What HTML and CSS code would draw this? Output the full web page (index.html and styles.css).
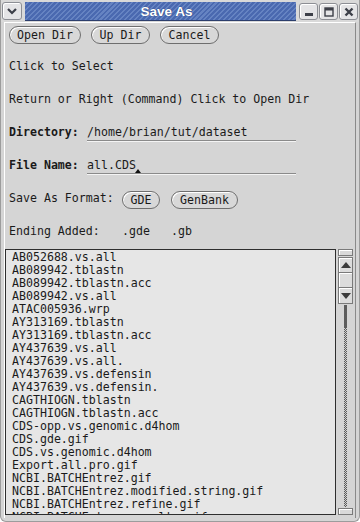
FILE: index.html
```html
<!DOCTYPE html>
<html lang="en">
<head>
    <meta charset="UTF-8">
    <meta name="viewport" content="width=device-width, initial-scale=1.0">
    <title>Save As</title>
    <link rel="stylesheet" href="styles.css">
</head>
<body>
    <div class="window">
        <div class="titlebar">
            <span class="tb-btn menu">
                <svg width="12" height="8" viewBox="0 0 12 8"><path d="M2 2 L6 6 L10 2" fill="none" stroke="#3c3f48" stroke-width="2.2"/></svg>
            </span>
            <div class="title">Save As</div>
            <span class="tb-btn">
                <svg width="12" height="12" viewBox="0 0 12 12"><rect x="2" y="7" width="8" height="3" fill="#3c3f48"/></svg>
            </span>
            <span class="tb-btn">
                <svg width="12" height="12" viewBox="0 0 12 12"><rect x="2" y="2" width="8" height="8" fill="none" stroke="#3c3f48" stroke-width="1.4"/><rect x="2" y="2" width="8" height="2.5" fill="#3c3f48"/></svg>
            </span>
            <span class="tb-btn">
                <svg width="12" height="12" viewBox="0 0 12 12"><path d="M2.5 2.5 L9.5 9.5 M9.5 2.5 L2.5 9.5" stroke="#3c3f48" stroke-width="2.4"/></svg>
            </span>
        </div>

        <div class="body">
            <div class="actions">
                <button class="pill">Open Dir</button>
                <button class="pill">Up Dir</button>
                <button class="pill">Cancel</button>
            </div>

            <div class="row">Click to Select</div>
            <div class="row">Return or Right (Command) Click to Open Dir</div>
            <div class="row">
                <span class="label">Directory:</span>
                <span class="entry">/home/brian/tut/dataset</span>
            </div>
            <div class="row">
                <span class="label">File Name:</span>
                <span class="entry">all.CDS<span class="caret"></span></span>
            </div>
            <div class="row format">
                <span class="col-label">Save As Format:</span>
                <span class="col-gde"><button class="pill small gde">GDE</button></span>
                <span><button class="pill small">GenBank</button></span>
            </div>
            <div class="row format">
                <span class="col-label">Ending Added:</span>
                <span class="col-gde">.gde</span>
                <span>.gb</span>
            </div>

            <div class="files">
                <div class="list" id="fileList"></div>
                <div class="scrollbar">
                    <div class="sb-cap"></div>
                    <div class="sb-btn"><span class="arrow up"></span></div>
                    <div class="sb-btn blank"></div>
                    <div class="sb-btn"><span class="arrow down"></span></div>
                    <div class="sb-trough">
                        <div class="sb-thumb"></div>
                        <div class="sb-rest"></div>
                    </div>
                    <div class="sb-cap"></div>
                </div>
            </div>
        </div>
    </div>

    <script>
        const files = [
            'AB052688.vs.all',
            'AB089942.tblastn',
            'AB089942.tblastn.acc',
            'AB089942.vs.all',
            'ATAC005936.wrp',
            'AY313169.tblastn',
            'AY313169.tblastn.acc',
            'AY437639.vs.all',
            'AY437639.vs.all.',
            'AY437639.vs.defensin',
            'AY437639.vs.defensin.',
            'CAGTHIOGN.tblastn',
            'CAGTHIOGN.tblastn.acc',
            'CDS-opp.vs.genomic.d4hom',
            'CDS.gde.gif',
            'CDS.vs.genomic.d4hom',
            'Export.all.pro.gif',
            'NCBI.BATCHEntrez.gif',
            'NCBI.BATCHEntrez.modified.string.gif',
            'NCBI.BATCHEntrez.refine.gif',
            'NCBI.BATCHEntrez.results.gif'
        ];

        const list = document.getElementById('fileList');
        files.forEach(name => {
            const item = document.createElement('div');
            item.className = 'item';
            item.textContent = name;
            list.appendChild(item);
        });
    </script>
</body>
</html>
```

FILE: styles.css
```css
body {
    margin: 0;
    font-family: "DejaVu Sans Mono", monospace;
    font-size: 11.6px;
    color: #1a1a1a;
}
.window {
    width: 360px;
    height: 522px;
    box-sizing: border-box;
    background: #d5d5d5;
    border: 1px solid #9c9c9c;
    border-top: none;
    border-radius: 0 0 6px 6px;
    display: flex;
    flex-direction: column;
    overflow: hidden;
}

/* title bar */
.titlebar {
    height: 22px;
    display: flex;
    align-items: flex-start;
    padding: 2px 1px 0 1px;
    box-sizing: border-box;
    background: #d9d9d9;
}
.tb-btn {
    width: 19px;
    height: 17px;
    margin-top: 1px;
    margin-left: 1px;
    box-sizing: border-box;
    border: 1px solid #8c8e94;
    border-radius: 3px;
    background: #e4e4e6;
    box-shadow: inset 1px 1px #fff;
    display: flex;
    align-items: center;
    justify-content: center;
}
.tb-btn.menu {
    width: 20px;
    height: 18px;
    margin-top: 0;
    margin-left: 0;
}
.title {
    flex: 1;
    height: 19px;
    margin: 0 2px 0 3px;
    box-sizing: border-box;
    border-bottom: 1px solid #2c3e6c;
    background: repeating-linear-gradient(135deg, #4a69b0 0 2px, #6583c2 2px 3.5px);
    color: #fff;
    font-family: "Liberation Sans", Arial, sans-serif;
    font-weight: bold;
    font-size: 13.5px;
    line-height: 19px;
    text-align: center;
    padding-left: 12px;
    text-shadow: 0 0 1px #223366;
}

/* dialog body */
.body {
    flex: 1;
    display: flex;
    flex-direction: column;
    margin: 0 3px 3px 3px;
    padding: 3px 0 3px 0;
    border-top: 1px solid #fff;
    border-left: 1px solid #fff;
    border-right: 1px solid #8a8a8a;
    min-height: 0;
}
.actions {
    display: flex;
    gap: 10px;
    padding-left: 4px;
}
.pill {
    height: 18px;
    padding: 0 7px;
    font-family: "DejaVu Sans Mono", monospace;
    font-size: 11.6px;
    color: #1a1a1a;
    background: #d8d8d8;
    border: 1px solid #6e6e6e;
    border-radius: 9px;
    box-shadow: inset 1px 1px #fff;
    line-height: 16px;
}
.pill.small {
    position: relative;
    top: 2px;
    padding: 0 8px;
}
.pill.gde {
    width: 38px;
    padding: 0;
}
.actions .pill:first-child {
    width: 72px;
}
.actions .pill:not(:first-child) {
    width: 59px;
}
.row {
    height: 33px;
    display: flex;
    align-items: center;
    padding-left: 4px;
    white-space: pre;
}
.actions + .row {
    margin-top: 5px;
}
.label {
    width: 78px;
    font-weight: bold;
}
.entry {
    position: relative;
    width: 209px;
    height: 15px;
    line-height: 14px;
    border-bottom: 1px solid #8a8a8a;
    box-shadow: 0 1px #f4f4f4;
    margin-top: 3px;
}
.caret {
    position: absolute;
    left: 48px;
    bottom: 0;
    width: 0;
    height: 0;
    border-left: 3px solid transparent;
    border-right: 3px solid transparent;
    border-bottom: 4px solid #111;
}
.col-label {
    width: 113px;
}
.col-gde {
    width: 49px;
}

/* file list */
.files {
    flex: 1;
    display: flex;
    margin-top: 2px;
    min-height: 0;
}
.list {
    flex: 1;
    background: #e6e6e6;
    border: 1px solid #2e2e2e;
    padding: 1px 0 0 6px;
    overflow: hidden;
    line-height: 13px;
    white-space: nowrap;
}
.scrollbar {
    width: 15px;
    margin: 0 2px 0 2px;
    display: flex;
    flex-direction: column;
}
.sb-cap {
    height: 7px;
    box-sizing: border-box;
    border: 1px solid #7a7a7a;
    box-shadow: inset 1px 1px #fff;
    background: #d9d9d9;
}
.sb-btn {
    height: 16px;
    box-sizing: border-box;
    border: 1px solid #7a7a7a;
    border-top: none;
    box-shadow: inset 1px 1px #fff;
    background: #dcdcdc;
    display: flex;
    align-items: center;
    justify-content: center;
}
.sb-cap + .sb-btn {
    margin-top: 1px;
    border-top: 1px solid #7a7a7a;
}
.sb-btn.blank {
    height: 15px;
}
.arrow {
    width: 0;
    height: 0;
    border-left: 5px solid transparent;
    border-right: 5px solid transparent;
}
.arrow.up {
    border-bottom: 6px solid #3a3a3a;
}
.arrow.down {
    border-top: 6px solid #3a3a3a;
}
.sb-trough {
    flex: 1;
    display: flex;
    flex-direction: column;
    align-items: center;
    padding: 1px 0 1px 0;
}
.sb-thumb {
    width: 3px;
    height: 23px;
    background: #5c5c5c;
}
.sb-rest {
    flex: 1;
    width: 3px;
    background: repeating-conic-gradient(#5a5a5a 0 25%, #d0d0d0 0 50%) 0 0 / 2px 2px;
}
```
